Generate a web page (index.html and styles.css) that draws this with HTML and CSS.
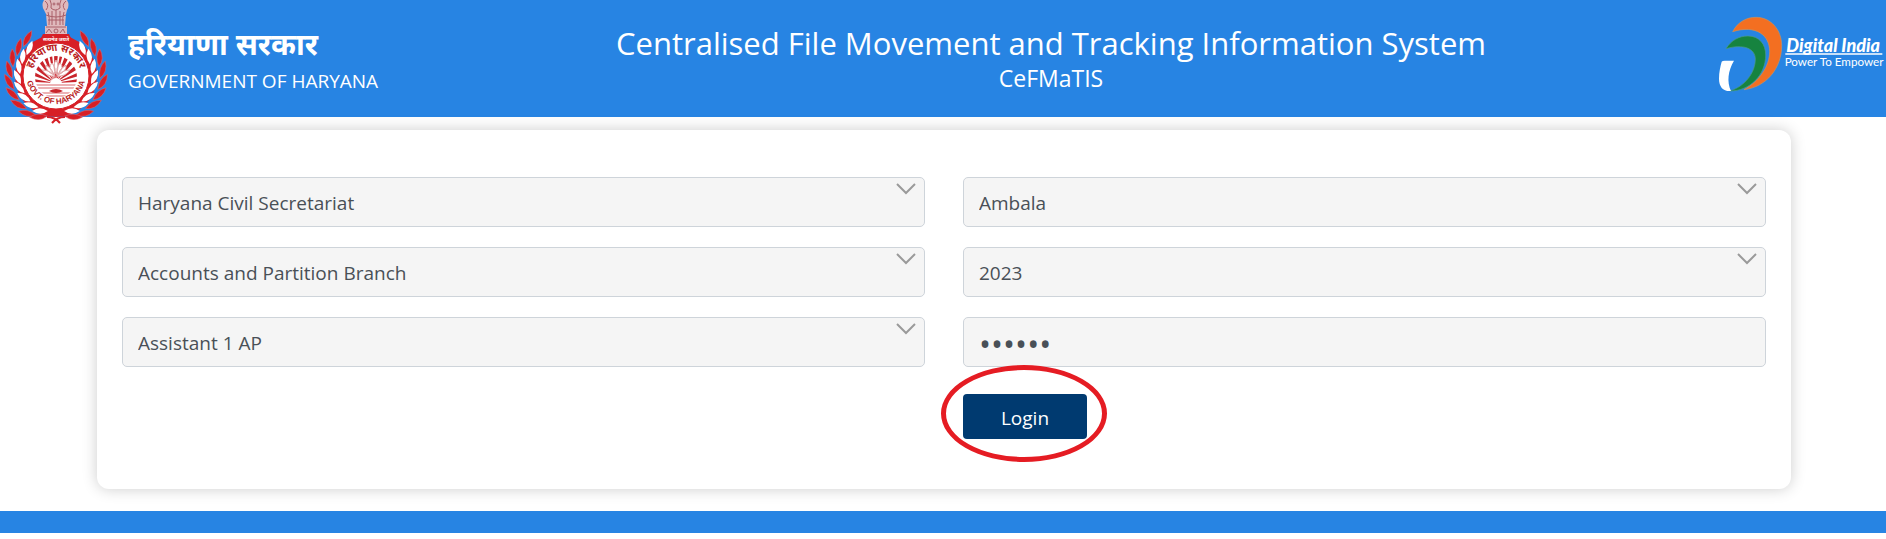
FILE: index.html
```
<!DOCTYPE html>
<html lang="en">
<head>
<meta charset="UTF-8" />
<meta name="viewport" content="width=device-width, initial-scale=1" />
<title>CeFMaTIS - Login</title>
<link rel="stylesheet" href="styles.css">
</head>
<body>

<header class="header">
  <div class="brand">
    <svg class="emblem" viewBox="0 0 112 124" role="img" aria-label="Haryana emblem">
      <defs>
        <path id="leaf-red" d="M65 33 Q60 24 49 25 Q54 33 65 33Z" fill="#d71f26" stroke="#e0666a" stroke-width="0.5" />
        <path id="leaf-white" d="M64 41 Q60 33 50 34 Q54 42 64 41Z" fill="#fff" />
        <g id="wreath">
          <use href="#leaf-red" transform="rotate(36 56 76)" />
          <use href="#leaf-red" transform="rotate(51 56 76)" />
          <use href="#leaf-red" transform="rotate(66 56 76)" />
          <use href="#leaf-red" transform="rotate(81 56 76)" />
          <use href="#leaf-red" transform="rotate(96 56 76)" />
          <use href="#leaf-red" transform="rotate(111 56 76)" />
          <use href="#leaf-red" transform="rotate(126 56 76)" />
          <use href="#leaf-red" transform="rotate(141 56 76)" />
          <use href="#leaf-red" transform="translate(0 -3) rotate(157 56 76)" />
          <use href="#leaf-white" transform="rotate(42 56 76)" />
          <use href="#leaf-white" transform="rotate(58 56 76)" />
          <use href="#leaf-white" transform="rotate(74 56 76)" />
          <use href="#leaf-white" transform="rotate(90 56 76)" />
          <use href="#leaf-white" transform="rotate(106 56 76)" />
          <use href="#leaf-white" transform="rotate(122 56 76)" />
          <use href="#leaf-white" transform="rotate(138 56 76)" />
          <use href="#leaf-white" transform="rotate(154 56 76)" />
        </g>
        <path id="arc-top" d="M32 83 A25 25 0 1 1 80 83" />
        <path id="arc-bottom" d="M26 74 A30 30 0 1 0 86 74" />
        <clipPath id="disc"><circle cx="56" cy="77" r="21" /></clipPath>
      </defs>
      <!-- lion capital -->
      <path d="M44 0 H67 Q70 5 67 10 L66 14 L65 26 H67 V35 H45 V26 H47 L46 14 L44 10 Q41 5 44 0Z" fill="#dfb9bc" />
      <g fill="none" stroke="#a95f68" stroke-width="1">
        <path d="M45 1 Q50 5 46 10 M66 1 Q61 5 65 10 M50 0 Q52 4 51 8 Q55 12 60 8 Q59 4 61 0" />
        <path d="M48 12 Q50 18 49 25 M52 11 V25 M56 10 V25 M60 11 V25 M64 12 Q62 18 63 25" />
        <path d="M46 15 Q56 19 66 15 M48 20 H64 M46 27 H66" />
        <path d="M46 33 L49 29 L52 33 M60 33 L63 29 L65 33" />
        <circle cx="56" cy="31" r="2" />
        <circle cx="54" cy="4" r="1" /><circle cx="58" cy="4" r="1" />
      </g>
      <!-- red body and wreath -->
      <circle cx="56" cy="76" r="41" fill="#d71f26" />
      <path d="M43 34 H69 Q71 41 84 46 L56 60 L28 46 Q41 41 43 34Z" fill="#d71f26" />
      <use href="#wreath" />
      <use href="#wreath" transform="translate(112 0) scale(-1 1)" />
      <path d="M47 117 Q55 117 60 123 M65 117 Q57 117 52 123" fill="none" stroke="#d71f26" stroke-width="2" />
      <text class="motto" x="56" y="41">सत्यमेव जयते</text>
      <circle cx="56" cy="76" r="33" fill="#fff" stroke="#d71f26" stroke-width="1" />
      <text class="seal-hindi"><textPath href="#arc-top" startOffset="50%">हरियाणा सरकार</textPath></text>
      <text class="seal-english"><textPath href="#arc-bottom" startOffset="50%">GOVT. OF HARYANA</textPath></text>
      <!-- sunrise, lotus and water -->
      <g clip-path="url(#disc)">
        <path d="M55 83 L34 82 V79Z M55 83 L34 76 V72Z M55 83 L34 68 L36 64Z M55 83 L38 61 L41 58Z M55 83 L43 56 L47 56Z M55 83 L49 54 H52Z M55 83 L54 54 H58Z M55 83 L60 54 H63Z M55 83 L65 56 L69 57Z M55 83 L71 59 L74 62Z M55 83 L76 65 L78 69Z M55 83 L79 72 V76Z M55 83 L79 79 V82Z" fill="#c9242b" />
        <path d="M34 85 H78 M38 88 H74 M36 93 H76 M40 96 H72" stroke="#d9666b" stroke-width="1" />
        <path d="M49 91 Q56 87 63 91 Q56 95 49 91Z" fill="#c9242b" />
        <path d="M50 84 A6 6 0 0 1 62 84Z" fill="#fff" />
      </g>
      <path d="M56 60 Q60 66 56 74 Q52 66 56 60Z M52 63 Q47 67 54 74 Q57 69 52 63Z M60 63 Q65 67 58 74 Q55 69 60 63Z M46 65 Q45 71 54 75 Q53 69 46 65Z M66 65 Q67 71 58 75 Q59 69 66 65Z M42 70 Q47 77 55 76 Q50 70 42 70Z M70 70 Q65 77 57 76 Q62 70 70 70Z" fill="#fff" stroke="#dfa3a5" stroke-width="1" />
    </svg>
    <div class="brand-text">
      <p class="brand-hindi" lang="hi">हरियाणा सरकार</p>
      <p class="brand-english">GOVERNMENT OF HARYANA</p>
    </div>
  </div>

  <div class="title">
    <h1>Centralised File Movement and Tracking Information System</h1>
    <p>CeFMaTIS</p>
  </div>

  <svg class="digital-india" viewBox="48 40 510 246" role="img" aria-label="Digital India">
    <path d="M98 96 C114 66 140 53 168 53 C212 53 245 90 245 138 C245 205 200 262 132 270 C178 244 209 200 209 155 C209 108 170 74 98 96Z" fill="#f36f21" stroke="#c9925f" stroke-width="2" />
    <path d="M78 147 C94 121 118 109 144 109 C178 109 197 134 197 166 C197 226 150 274 90 274 C134 260 166 220 166 178 C166 146 130 132 78 147Z" fill="#16833f" stroke="#4c9a86" stroke-width="2" />
    <path d="M65 186 Q67 183 74 183 H102 C84 214 80 245 93 274 C70 276 57 262 57 237 C57 218 61 200 65 186Z" fill="#fff" />
    <text class="di-name" x="259" y="158">Digital India</text>
    <path d="M256 163 H547" stroke="#fff" stroke-width="4" />
    <text class="di-tagline" x="254" y="199">Power To Empower</text>
  </svg>
</header>

<main class="card">
  <form class="login-form">
    <select class="field" aria-label="Organisation"><option>Haryana Civil Secretariat</option></select>
    <select class="field" aria-label="District"><option>Ambala</option></select>
    <select class="field" aria-label="Branch"><option>Accounts and Partition Branch</option></select>
    <select class="field" aria-label="Year"><option>2023</option></select>
    <select class="field" aria-label="Designation"><option>Assistant 1 AP</option></select>
    <input class="field password" type="password" value="123456" aria-label="Password">
    <div class="actions">
      <button type="button" class="btn">Login</button>
      <span class="ring"></span>
    </div>
  </form>
</main>

<footer class="footer"></footer>

</body>
</html>
```

FILE: styles.css
```
* {
  box-sizing: border-box;
}
body {
  margin: 0;
  background-color: #fff;
  font-family: "Open Sans", "Noto Sans", sans-serif;
  color: #495057;
}
h1, p {
  margin: 0;
  font-weight: 400;
}
.header {
  display: flex;
  align-items: flex-start;
  height: 117px;
  background-color: #2784e3;
  color: #fff;
}
.brand {
  display: flex;
  gap: 16px;
  min-width: 386px;
}
.emblem {
  width: 112px;
  height: 124px;
  flex: none;
}
.motto {
  font-size: 5px;
  font-weight: 700;
  text-anchor: middle;
  fill: #fff;
}
.seal-hindi {
  font-size: 10px;
  font-weight: 700;
  text-anchor: middle;
  fill: #b91c22;
}
.seal-english {
  font-family: "Liberation Sans", Arial, sans-serif;
  font-size: 8px;
  font-weight: 700;
  text-anchor: middle;
  fill: #b91c22;
}
.brand-text {
  padding-top: 24px;
  white-space: nowrap;
}
.brand-hindi {
  font-size: 30px;
  font-weight: 700;
  line-height: 40px;
}
.brand-english {
  font-size: 19px;
  line-height: 34px;
}
.title {
  flex: 1;
  padding-top: 22px;
  text-align: center;
}
.title h1 {
  font-size: 31px;
  line-height: 42px;
}
.title p {
  font-size: 23px;
  line-height: 28px;
}
.digital-india {
  width: 170px;
  height: 82px;
  margin-top: 13px;
  flex: none;
}
.di-name {
  font-family: Lato, sans-serif;
  font-size: 54px;
  font-weight: 900;
  font-style: italic;
  fill: #fff;
}
.di-tagline {
  font-family: Lato, sans-serif;
  font-size: 35px;
  fill: #fff;
}
.card {
  margin: 13px 95px 22px 97px;
  padding: 47px 25px 50px;
  background-color: #fff;
  border-radius: 12px;
  box-shadow: 0 0 15px rgba(0, 0, 0, 0.2);
}
.login-form {
  display: grid;
  grid-template-columns: 1fr 1fr;
  gap: 20px 38px;
}
.field {
  width: 100%;
  height: 50px;
  padding: 2px 15px 0;
  border: 1px solid #ced4da;
  border-radius: 5px;
  background-color: #f5f5f5;
  color: #495057;
  font-family: inherit;
  font-size: 19px;
}
.password {
  font-size: 32px;
}
select.field {
  appearance: none;
  background-image: url("data:image/svg+xml,%3Csvg xmlns='http://www.w3.org/2000/svg' viewBox='0 0 20 12'%3E%3Cpath d='M1 1 L10 10 L19 1' fill='none' stroke='%239a9a9a' stroke-width='2'/%3E%3C/svg%3E");
  background-repeat: no-repeat;
  background-position: right 8px top 5px;
  background-size: 20px 12px;
}
.actions {
  grid-column: 2;
  justify-self: start;
  position: relative;
  margin-top: 7px;
}
.btn {
  display: block;
  width: 124px;
  height: 45px;
  padding: 2px 0 0;
  border: 0;
  border-radius: 4px;
  background-color: #003a70;
  color: #fff;
  font-family: inherit;
  font-size: 19px;
  cursor: pointer;
}
/* highlight around the login button */
.ring {
  position: absolute;
  inset: -29px -20px -23px -22px;
  border: 5px solid #e51c23;
  border-radius: 50%;
  pointer-events: none;
}
.footer {
  height: 22px;
  background-color: #2784e3;
}
```
